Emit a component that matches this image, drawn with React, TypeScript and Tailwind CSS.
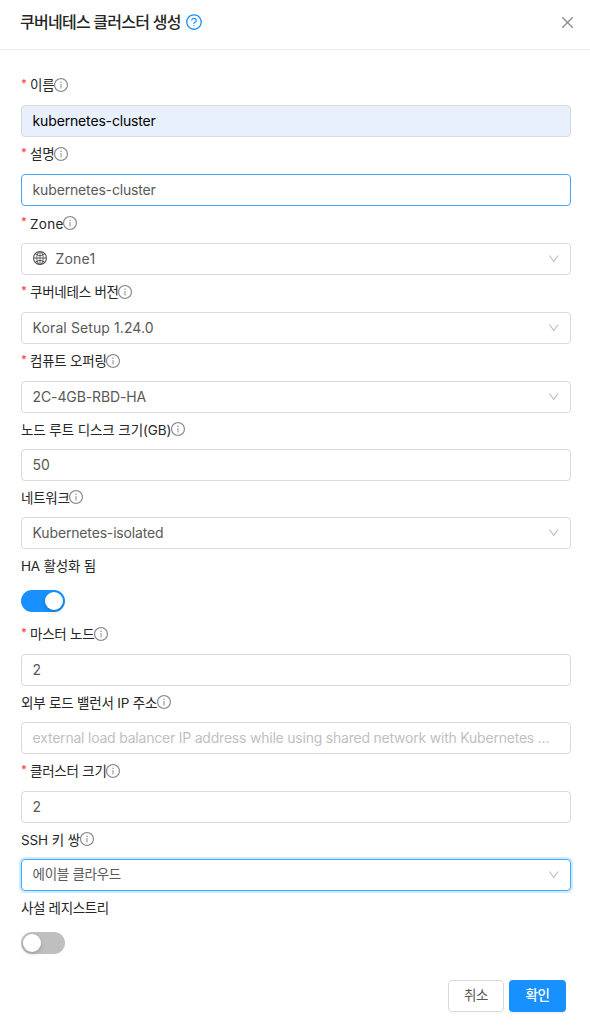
import type { ReactNode } from 'react';
import {
  AiOutlineClose,
  AiOutlineDown,
  AiOutlineGlobal,
  AiOutlineInfoCircle,
  AiOutlineQuestionCircle,
} from 'react-icons/ai';

interface FieldProps {
  label: string;
  required?: boolean;
  info?: boolean;
  tracking?: string;
  children: ReactNode;
}

function Field({ label, required = false, info = true, tracking = 'tracking-[-0.25px]', children }: FieldProps) {
  return (
    <div>
      <div className={`flex items-center text-[#262626] ${required ? 'h-[37px] pb-[3px]' : 'h-9 pb-[4px]'}`}>
        {required && (
          <span className="mr-1 w-[5px] pb-[4px] text-[11px] leading-none font-semibold text-[#ff4d4f]">*</span>
        )}
        <span className={`text-[13.5px] leading-5 whitespace-nowrap ${required ? '' : 'pt-[1px]'} ${tracking}`}>{label}</span>
        {info && <AiOutlineInfoCircle className="-ml-[1.3px] size-4 text-[#8c8c8c]" />}
      </div>
      {children}
    </div>
  );
}

interface BoxProps {
  children: ReactNode;
  select?: boolean;
  tone?: string;
  font?: string;
}

function Box({
  children,
  select = false,
  tone = 'border-[#d9d9d9] text-[#595959]',
  font = 'text-[14px] tracking-[-0.16px]',
}: BoxProps) {
  return (
    <div className={`flex h-8 items-center justify-between rounded-[4px] border pr-[10px] pb-[2px] pl-[10.6px] ${tone} ${font}`}>
      <span className="flex items-center whitespace-nowrap">{children}</span>
      {select && <AiOutlineDown className="mt-[2px] size-[13.5px] shrink-0 text-[#bfbfbf]" />}
    </div>
  );
}

function Toggle({ on }: { on: boolean }) {
  return (
    <div className="flex h-8 items-center">
      <div className={`flex h-[22px] w-11 items-center rounded-full p-[2px] ${on ? 'justify-end bg-[#1890ff]' : 'bg-[#bfbfbf]'}`}>
        <span className="size-[18px] rounded-full bg-white shadow-[0_2px_4px_rgba(0,35,11,0.2)]" />
      </div>
    </div>
  );
}

export default function App() {
  return (
    <div className="h-[1032px] w-[590px] bg-white font-[Inter,'Noto_Sans_CJK_KR',sans-serif] text-[#262626]">
      <header className="flex h-[50px] items-center justify-between border-b border-[#ebebeb] pr-[14.5px] pb-[5px] pl-5">
        <div className="flex items-center">
          <h1 className="text-[16px] leading-6 font-medium tracking-[-0.75px]">쿠버네테스 클러스터 생성</h1>
          <AiOutlineQuestionCircle className="ml-1 size-[18px] text-[#1890ff]" />
        </div>
        <AiOutlineClose className="mt-[1px] size-[17px] text-[#8c8c8c]" />
      </header>
      <main className="pt-[18px] pr-[19px] pl-[21px]">
        <Field label="이름" required>
          <Box tone="border-[#d9d9d9] bg-[#e8f0fe] text-black">kubernetes-cluster</Box>
        </Field>
        <Field label="설명" required>
          <Box tone="border-[#40a9ff] text-[#595959]">kubernetes-cluster</Box>
        </Field>
        <Field label="Zone" required tracking="pt-[2px] tracking-[0.3px]">
          <Box select font="text-[14px] tracking-[0.2px]">
            <AiOutlineGlobal className="mr-[7.5px] -ml-[0.6px] size-4" />
            Zone1
          </Box>
        </Field>
        <Field label="쿠버네테스 버전" required>
          <Box select font="text-[14px] tracking-[0.1px]">Koral Setup 1.24.0</Box>
        </Field>
        <Field label="컴퓨트 오퍼링" required>
          <Box select font="text-[14px] tracking-[-0.12px]">2C-4GB-RBD-HA</Box>
        </Field>
        <Field label="노드 루트 디스크 크기(GB)" tracking="tracking-[-0.1px]">
          <Box>50</Box>
        </Field>
        <Field label="네트워크">
          <Box select>Kubernetes-isolated</Box>
        </Field>
        <Field label="HA 활성화 됨" info={false} tracking="tracking-[-0.2px]">
          <Toggle on />
        </Field>
        <Field label="마스터 노드" required>
          <Box>2</Box>
        </Field>
        <Field label="외부 로드 밸런서 IP 주소" tracking="tracking-[-0.2px]">
          <Box tone="border-[#d9d9d9] text-[#bfbfbf]" font="text-[14px] tracking-[-0.215px]">
            external load balancer IP address while using shared network with Kubernetes ...
          </Box>
        </Field>
        <Field label="클러스터 크기" required>
          <Box>2</Box>
        </Field>
        <Field label="SSH 키 쌍" tracking="tracking-[-0.1px]">
          <Box
            select
            tone="border-[#40a9ff] text-[#595959] shadow-[0_0_0_2px_rgba(24,144,255,0.2)]"
            font="text-[13.5px] tracking-[-0.3px]"
          >
            에이블 클라우드
          </Box>
        </Field>
        <Field label="사설 레지스트리" info={false} tracking="tracking-[-0.35px]">
          <Toggle on={false} />
        </Field>
      </main>
      <footer className="flex justify-end gap-[5px] pt-[21px] pr-6 text-[13.5px] tracking-[-0.4px]">
        <button className="h-8 w-14 rounded-[4px] border border-[#d9d9d9] pb-[1px] text-[#595959] shadow-[0_2px_0_rgba(0,0,0,0.016)]">취소</button>
        <button className="h-8 w-[57px] rounded-[4px] bg-[#1890ff] pb-[1px] font-medium text-white shadow-[0_2px_0_rgba(0,0,0,0.045)]">확인</button>
      </footer>
    </div>
  );
}
